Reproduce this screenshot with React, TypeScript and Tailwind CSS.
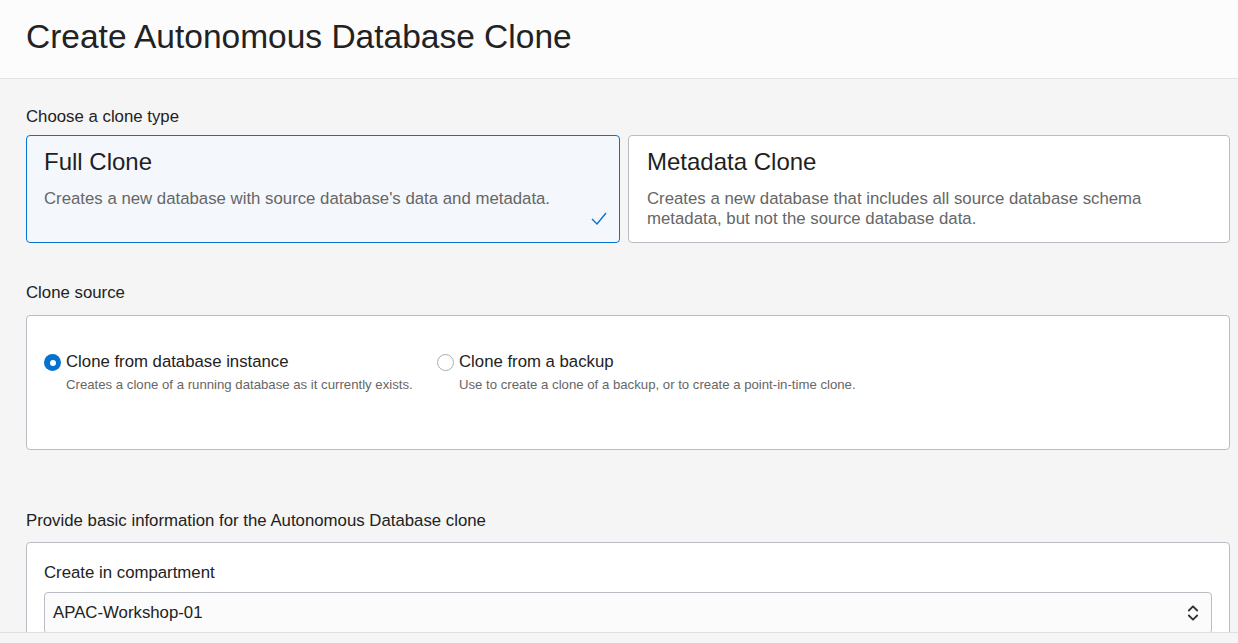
import { ChevronsUpDown } from 'lucide-react'

function TypeCard({ title, desc, selected }: { title: string; desc: string; selected?: boolean }) {
  return (
    <div
      className={
        selected
          ? 'relative w-[594px] shrink-0 h-[108px] rounded border border-[#0572ce] bg-[#f4f8fd] px-[17px] pt-[11px]'
          : 'relative flex-1 h-[108px] rounded border border-[#b9bdc3] bg-white px-[18px] pt-[11px]'
      }
    >
      <div className="text-[24px] leading-[30px] text-[#1f1f1f]">{title}</div>
      <div className="mt-[12px] text-[16.8px] leading-[20px] text-[#666]">{desc}</div>
      {selected && (
        <svg className="absolute right-[10px] bottom-[14px] h-[20px] w-[20px]" viewBox="0 0 20 20" fill="none">
          <path d="M3 11l5 5 9-11" stroke="#0572ce" strokeWidth="1.4" />
        </svg>
      )}
    </div>
  )
}

function Radio({ label, hint, checked }: { label: string; hint: string; checked?: boolean }) {
  return (
    <div className="flex">
      <div className="pt-[3px]">
        {checked ? (
          <div className="h-[17px] w-[17px] rounded-full bg-[#0572ce] flex items-center justify-center">
            <div className="h-[6px] w-[6px] rounded-full bg-white" />
          </div>
        ) : (
          <div className="h-[17px] w-[17px] rounded-full border border-[#a9adb3] bg-white" />
        )}
      </div>
      <div className="ml-[5px]">
        <div className="text-[16.75px] leading-[22px] text-[#222]">{label}</div>
        <div className="mt-[3px] text-[13.2px] leading-[18px] text-[#666]">{hint}</div>
      </div>
    </div>
  )
}

export default function App() {
  return (
    <div className="h-screen flex flex-col bg-[#f5f5f5] overflow-hidden" style={{ fontFamily: '"Liberation Sans", Arial, sans-serif' }}>
      <header className="h-[79px] shrink-0 bg-[#fcfcfc] border-b border-[#e4e4e4] px-[26px] pt-[16px]">
        <h1 className="text-[33.5px] leading-[42px] text-[#222]">Create Autonomous Database Clone</h1>
      </header>

      <main className="flex-1 overflow-hidden pl-[26px] pr-[8px]">
        <div className="pt-[28px] text-[16.8px] leading-[20px] text-[#222]">Choose a clone type</div>
        <div className="mt-[8px] flex gap-[8px]">
          <TypeCard selected title="Full Clone" desc="Creates a new database with source database's data and metadata." />
          <TypeCard
            title="Metadata Clone"
            desc="Creates a new database that includes all source database schema metadata, but not the source database data."
          />
        </div>

        <div className="mt-[40px] text-[16.8px] leading-[20px] text-[#222]">Clone source</div>
        <div className="mt-[12px] h-[135px] rounded border border-[#b9bdc3] bg-white px-[17px] pt-[35px]">
          <div className="flex">
            <div className="w-[393px]">
              <Radio checked label="Clone from database instance" hint="Creates a clone of a running database as it currently exists." />
            </div>
            <Radio label="Clone from a backup" hint="Use to create a clone of a backup, or to create a point-in-time clone." />
          </div>
        </div>

        <div className="mt-[61px] text-[16.8px] leading-[20px] text-[#222]">Provide basic information for the Autonomous Database clone</div>
        <div className="mt-[11px] rounded-t border border-[#b9bdc3] bg-white px-[17px] pt-[20px] pb-[20px]">
          <div className="text-[16.8px] leading-[20px] text-[#222]">Create in compartment</div>
          <div className="mt-[9px] h-[42px] rounded border border-[#b9bdc3] bg-[#fbfbfb] pl-[8px] pr-[8px] pt-[10px] flex items-start justify-between">
            <span className="text-[16.8px] leading-[20px] text-[#222]">APAC-Workshop-01</span>
            <ChevronsUpDown className="h-[20px] w-[20px] text-[#333]" strokeWidth={2.2} />
          </div>
        </div>
      </main>

      <footer className="h-[11px] shrink-0 border-t border-[#e0e0e0] bg-[#f5f5f5]" />
    </div>
  )
}
